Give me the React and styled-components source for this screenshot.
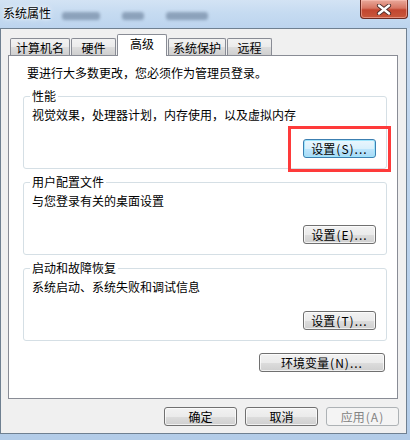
import React from "react";
import styled, { createGlobalStyle, css } from "styled-components";

const Global = createGlobalStyle`
  html, body { margin: 0; padding: 0; background: #b9d1ea; }
  body { font-family: "Noto Sans CJK SC", "Noto Sans", sans-serif; font-size: 12px; color: #000; }
  * { box-sizing: border-box; }
`;

const Window = styled.div`
  position: relative;
  width: 410px;
  height: 440px;
  overflow: hidden;
  display: flex;
  flex-direction: column;
  background: linear-gradient(to bottom, #c9dcf1 0%, #bcd3ec 40%, #b3cce8 100%);
`;

const TitleBar = styled.div`
  height: 28px;
  display: flex;
  align-items: flex-start;
  background: linear-gradient(to bottom, #d3e3f4 0%, #c6dbf1 45%, #bcd4ee 100%);
`;

const Title = styled.span`
  margin: 6px 0 0 3px;
  line-height: 14px;
  font-size: 12px;
  color: #000;
  text-shadow: 0 0 6px #fff, 0 0 3px #fff;
`;

const Ghosts = styled.div`
  display: flex;
  gap: 22px;
  margin: 10px 0 0 11px;
`;

const Ghost = styled.span`
  width: ${(p) => p.$w}px;
  height: 8px;
  margin-top: 2px;
  background: rgba(50, 70, 100, 0.38);
  border-radius: 3px;
  filter: blur(1.8px);
`;

const CloseBtn = styled.div`
  margin-left: auto;
  margin-right: 2px;
  width: 48px;
  height: 19px;
  border: 1px solid #6b2a22;
  border-top: none;
  border-radius: 0 0 4px 4px;
  background: linear-gradient(to bottom, #e9a99b 0%, #d77563 45%, #c24630 55%, #c8583c 100%);
  box-shadow: inset 0 0 0 1px rgba(255, 200, 190, 0.5);
  display: flex;
  align-items: center;
  justify-content: center;
`;

const Client = styled.div`
  width: 407px;
  height: 406px;
  border: 1px solid #6f8091;
  background: #f0f0f0;
  padding: 5px 8px 0 7px;
  display: flex;
  flex-direction: column;
`;

const TabStrip = styled.div`
  position: relative;
  z-index: 1;
  display: flex;
  gap: 1px;
  padding-left: 2px;
  height: 22px;
  margin-bottom: -1px;
`;

const Tab = styled.div`
  width: ${(p) => p.$w}px;
  border: 1px solid #898c95;
  border-bottom: none;
  border-radius: 2px 2px 0 0;
  text-align: center;
  font-size: 12px;
  ${(p) =>
    p.$active
      ? css`
          height: 22px;
          background: #fff;
          line-height: 16px;
          padding-top: 1px;
        `
      : css`
          margin-top: 4px;
          height: 17px;
          line-height: 16px;
          padding-top: 1px;
          background: linear-gradient(to bottom, #f2f2f2 0%, #ebebeb 50%, #dddddd 51%, #cfcfcf 100%);
        `}
`;

const Panel = styled.div`
  width: 390px;
  height: 344px;
  border: 1px solid #898c95;
  background: #fff;
  padding: 10px 10px 0 14px;
  display: flex;
  flex-direction: column;
`;

const Intro = styled.div`
  line-height: 14px;
  margin: 0 0 3px 4px;
`;

const Group = styled.fieldset`
  margin: 6px 0 0 0;
  padding: 5px 10px 10px 8px;
  border: 1px solid #d5dfe5;
  border-radius: 3px;
  min-width: 0;
  display: flex;
  flex-direction: column;
`;

const Legend = styled.legend`
  padding: 0 2px;
  margin-left: -2px;
  line-height: 14px;
  font-size: 12px;
`;

const Desc = styled.div`
  line-height: 14px;
`;

const ButtonRow = styled.div`
  display: flex;
  justify-content: flex-end;
  margin-top: ${(p) => p.$mt || 0}px;
  margin-right: ${(p) => p.$mr || 0}px;
  gap: ${(p) => p.$gap || 0}px;
`;

const Button = styled.button`
  width: ${(p) => p.$w}px;
  height: 19px;
  padding: 0;
  border: 1px solid #707070;
  border-radius: 3px;
  font-family: "Noto Sans CJK SC", "Noto Sans", sans-serif;
  font-size: 12px;
  line-height: 16px;
  color: #000;
  text-align: center;
  background: linear-gradient(to bottom, #f2f2f2 0%, #ebebeb 50%, #dddddd 51%, #cfcfcf 100%);
  box-shadow: inset 0 0 0 1px rgba(255, 255, 255, 0.7);
  ${(p) =>
    p.$variant === "default" &&
    css`
      border-color: #3c7fb1;
      background: linear-gradient(to bottom, #eaf6fd 0%, #d9f0fc 50%, #bee6fd 51%, #a7d9f5 100%);
      box-shadow: inset 0 0 0 1px #9ee5fc;
    `}
  ${(p) =>
    p.$variant === "disabled" &&
    css`
      border-color: #adb2b5;
      background: #f4f4f4;
      color: #838383;
      box-shadow: none;
    `}
`;

const Key = styled.span`
  letter-spacing: 1px;
  margin-left: 1px;
`;

const Highlight = styled.div`
  position: absolute;
  left: 288px;
  top: 126px;
  width: 103px;
  height: 46px;
  border: 3px solid #fe3a3a;
  pointer-events: none;
`;

const CloseGlyph = () => (
  <svg width="16" height="11" viewBox="0 0 16 11">
    <path
      d="M3 1.5 L13 9.5 M13 1.5 L3 9.5"
      stroke="#4a2a28"
      strokeWidth="4.2"
      strokeLinecap="round"
      fill="none"
    />
    <path
      d="M3 1.5 L13 9.5 M13 1.5 L3 9.5"
      stroke="#ffffff"
      strokeWidth="2.4"
      strokeLinecap="round"
      fill="none"
    />
  </svg>
);

const groups = [
  { title: "性能", desc: "视觉效果，处理器计划，内存使用，以及虚拟内存", label: "设置", key: "(S)...", variant: "default" },
  { title: "用户配置文件", desc: "与您登录有关的桌面设置", label: "设置", key: "(E)..." },
  { title: "启动和故障恢复", desc: "系统启动、系统失败和调试信息", label: "设置", key: "(T)..." },
];

const tabs = [
  { name: "计算机名", w: 60 },
  { name: "硬件", w: 45 },
  { name: "高级", w: 50, active: true },
  { name: "系统保护", w: 58 },
  { name: "远程", w: 45 },
];

export default function App() {
  return (
    <>
      <Global />
      <Window>
        <TitleBar>
          <Title>系统属性</Title>
          <Ghosts>
            <Ghost $w={38} />
            <Ghost $w={22} />
            <Ghost $w={42} />
          </Ghosts>
          <CloseBtn>
            <CloseGlyph />
          </CloseBtn>
        </TitleBar>
        <Client>
          <TabStrip>
            {tabs.map((t) => (
              <Tab key={t.name} $w={t.w} $active={t.active}>
                {t.name}
              </Tab>
            ))}
          </TabStrip>
          <Panel>
            <Intro>要进行大多数更改，您必须作为管理员登录。</Intro>
            {groups.map((g) => (
              <Group key={g.title}>
                <Legend>{g.title}</Legend>
                <Desc>{g.desc}</Desc>
                <ButtonRow $mt={17}>
                  <Button $w={73} $variant={g.variant}>
                    {g.label}
                    <Key>{g.key}</Key>
                  </Button>
                </ButtonRow>
              </Group>
            ))}
            <ButtonRow $mt={12} $mr={2}>
              <Button $w={126}>
                环境变量<Key>(N)...</Key>
              </Button>
            </ButtonRow>
          </Panel>
          <ButtonRow $mt={8} $mr={-1} $gap={8}>
            <Button $w={73}>确定</Button>
            <Button $w={73}>取消</Button>
            <Button $w={73} $variant="disabled">
              应用<Key>(A)</Key>
            </Button>
          </ButtonRow>
        </Client>
        <Highlight />
      </Window>
    </>
  );
}
